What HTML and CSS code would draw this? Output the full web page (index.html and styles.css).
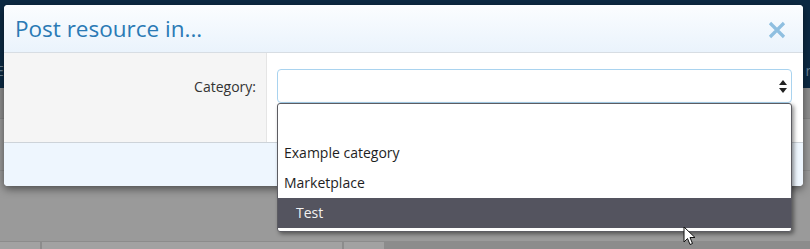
FILE: index.html
```html
<!DOCTYPE html>
<html lang="en">
<head>
    <meta charset="UTF-8">
    <meta name="viewport" content="width=device-width, initial-scale=1.0">
    <title>Post resource in...</title>
    <link rel="stylesheet" href="styles.css">
</head>
<body>
    <div class="page">
        <div class="navbar">
            <span class="nav-item">E</span>
            <span class="nav-item">n</span>
        </div>
        <div class="rows">
            <div class="row row-a"></div>
            <div class="row row-b"></div>
            <div class="row row-c"></div>
        </div>
        <div class="bottom-bar">
            <span class="tab"></span>
            <span class="tab tab-wide"></span>
            <span class="tab"></span>
        </div>
    </div>

    <div class="modal">
        <div class="modal-header">
            <h3 class="modal-title">Post resource in...</h3>
            <span class="close">
                <svg width="18" height="18" viewBox="0 0 18 18">
                    <path d="M2 2 L16 16 M16 2 L2 16" stroke="#8fbfe0" stroke-width="3.2" stroke-linecap="butt"/>
                </svg>
            </span>
        </div>
        <div class="modal-body">
            <div class="label-col">
                <label class="field-label">Category:</label>
            </div>
            <div class="field-col">
                <div class="select-box">
                    <span class="select-value"></span>
                    <svg class="select-arrows" width="8" height="13" viewBox="0 0 8 13">
                        <path d="M4 0 L8 5 L0 5 Z" fill="#222"/>
                        <path d="M0 8 L8 8 L4 13 Z" fill="#222"/>
                    </svg>
                </div>
            </div>
        </div>
        <div class="modal-footer"></div>
    </div>

    <ul class="options">
        <li class="option option-empty"></li>
        <li class="option">Example category</li>
        <li class="option">Marketplace</li>
        <li class="option option-child selected">Test</li>
    </ul>

    <svg class="cursor" width="14" height="20" viewBox="0 0 14 20">
        <path d="M1 1 L1 16 L4.5 12.5 L7 18.5 L9.5 17.5 L7 11.5 L12 11.5 Z" fill="#fff" stroke="#111" stroke-width="1"/>
    </svg>
</body>
</html>
```

FILE: styles.css
```css
html, body {
    margin: 0;
    padding: 0;
}

body {
    width: 810px;
    height: 249px;
    overflow: hidden;
    position: relative;
    font-family: 'Open Sans', 'Noto Sans', sans-serif;
    background-color: #9a9a9a;
}

.page {
    display: flex;
    flex-direction: column;
    height: 249px;
}

.navbar {
    height: 88px;
    background-color: #0c2a44;
    display: flex;
    justify-content: space-between;
    align-items: flex-end;
    padding: 0 0 8px;
    box-sizing: border-box;
}

.nav-item {
    color: #6f8699;
    font-size: 14px;
    line-height: 18px;
    margin: 0 -4px;
}

.rows {
    flex: 1;
    display: flex;
    flex-direction: column;
}

.row-a {
    height: 30px;
    background-color: #8f8f8f;
    border-bottom: 1px solid #868686;
}

.row-b {
    height: 51px;
    background-color: #9a9a9a;
    border-bottom: 1px solid #8e8e8e;
}

.row-c {
    flex: 1;
    background-color: #9a9a9a;
}

.bottom-bar {
    height: 7px;
    display: flex;
    gap: 2px;
    background-color: #8c8c8c;
    padding-top: 1px;
}

.tab {
    width: 40px;
    background-color: #a2a2a2;
}

.tab-wide {
    width: 300px;
}

.modal {
    position: absolute;
    left: 4px;
    top: 5px;
    width: 799px;
    height: 181px;
    background-color: #fff;
    border-radius: 4px;
    box-shadow: 0 3px 9px rgba(0, 0, 0, 0.5);
    display: flex;
    flex-direction: column;
    overflow: hidden;
}

.modal-header {
    height: 47px;
    border-bottom: 1px solid #d7dde3;
    background: linear-gradient(to bottom, #fbfdff, #eaf3fc);
    display: flex;
    align-items: center;
    justify-content: space-between;
    padding: 0 17px 0 11px;
}

.modal-title {
    margin: 0;
    font-size: 22.5px;
    font-weight: normal;
    color: #2a7ab5;
}

.close {
    display: flex;
    margin-top: 2px;
}

.modal-body {
    height: 89px;
    display: flex;
}

.label-col {
    width: 263px;
    background-color: #f5f5f5;
    border-right: 1px solid #e5e5e5;
    display: flex;
    justify-content: flex-end;
    align-items: flex-start;
    padding: 24px 10px 0 0;
    box-sizing: border-box;
}

.field-label {
    font-size: 14px;
    color: #333;
}

.field-col {
    flex: 1;
    padding: 16px 11px 0 10px;
}

.select-box {
    height: 34px;
    box-sizing: border-box;
    border: 1px solid #a9d3ef;
    border-radius: 4px;
    display: flex;
    align-items: center;
    justify-content: flex-end;
    padding-right: 4px;
}

.modal-footer {
    flex: 1;
    border-top: 1px solid #cdd3d9;
    background-color: #eef6fe;
}

.options {
    position: absolute;
    left: 277px;
    top: 103px;
    width: 515px;
    margin: 0;
    padding: 1px 0 3px;
    list-style: none;
    box-sizing: border-box;
    background-color: #fff;
    border: 1px solid #5c5c62;
    border-radius: 3px;
    box-shadow: 2px 2px 4px rgba(0, 0, 0, 0.45);
    font-size: 14px;
    color: #1e1e1e;
}

.option {
    height: 30px;
    line-height: 30px;
    padding-left: 6px;
}

.option-empty {
    height: 33px;
}

.option-child {
    padding-left: 18px;
}

.selected {
    background-color: #54545f;
    color: #f2f2f2;
}

.cursor {
    position: absolute;
    left: 683px;
    top: 226px;
}
```
